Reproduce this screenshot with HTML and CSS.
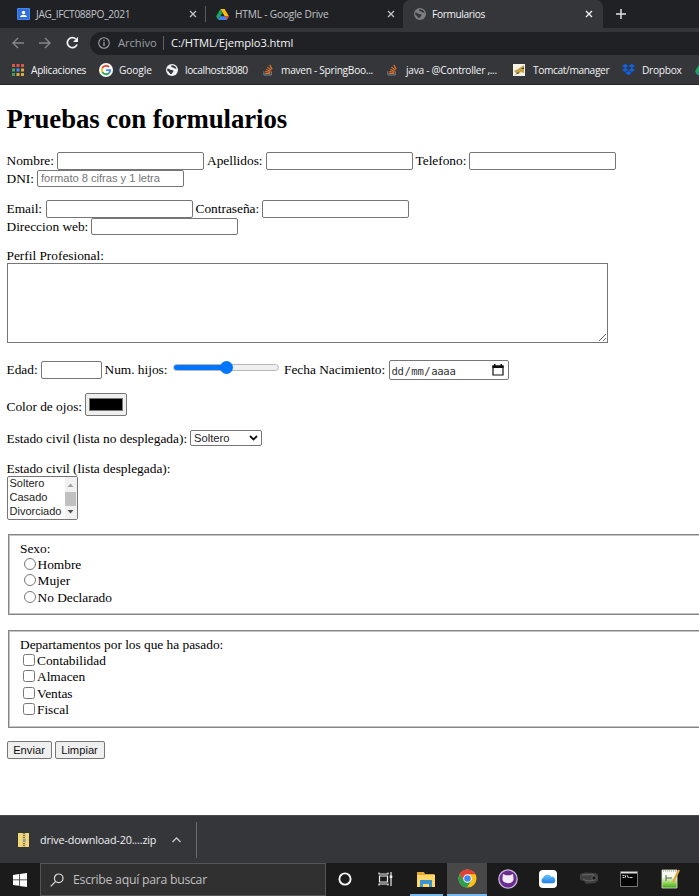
FILE: index.html
```html
<!DOCTYPE html>
<html lang="es">
<head>
<meta charset="utf-8">
<title>Formularios</title>
<link rel="stylesheet" href="styles.css">
</head>
<body>
<svg class="defs" aria-hidden="true">
  <symbol id="close" viewBox="0 0 8 8"><path d="M1 1l6 6M7 1l-6 6" stroke="currentColor" stroke-width="1.3"/></symbol>
  <symbol id="drive" viewBox="0 0 14 12"><path d="M4.7 0h4.6L14 8H9.4z" fill="#fbbc04"/><path d="M4.7 0L7 4 2.4 12 0 8z" fill="#1ea362"/><path d="M4.7 8H14l-2.4 4H2.4z" fill="#4285f4"/><path d="M9.4 8H14l-2.4 4z" fill="#ea4335"/></symbol>
  <symbol id="globe" viewBox="0 0 12 12"><circle cx="6" cy="6" r="6" fill="currentColor"/><path d="M1.300 4.500C3 4 3.500 6 5.500 6s2.500 1 1.500 2-1 2.500-2.500 2C3 9 3.500 7.500 1.300 7zM5.500 1.300c-1 1.200 0 2.200 1.500 2.200s1 1.500 3.500 1.300C10 2.800 8 1.300 5.500 1.300z" fill="#35363a"/></symbol>
  <symbol id="stack" viewBox="0 0 12 13"><path d="M1 8.500v4h8v-4" stroke="#8a8d91" fill="none"/><path d="M2.300 10.700h5.500M2.500 8.700l5.500.6M3.200 6.500l5.100 1.600M4.800 4l4.300 3M7.300 1.500l2.700 4.600" stroke="#d9712b" stroke-width="1.300"/></symbol>
</svg>

<header class="chrome">
  <div class="tabs">
    <div class="tab tab-one">
      <svg width="13" height="12" viewBox="0 0 13 12"><rect width="13" height="12" rx="1" fill="#4285f4"/><rect x="1" y="1" width="11" height="10" fill="#2f6fd6"/><circle cx="6.500" cy="4.500" r="1.700" fill="#fff"/><path d="M3 9c.5-3 6.500-3 7 0z" fill="#fff"/></svg>
      <span class="tab-title t1">JAG_IFCT088PO_2021</span>
      <svg class="x" width="8" height="8"><use href="#close"/></svg>
    </div>
    <div class="tab tab-two">
      <svg width="13" height="11"><use href="#drive"/></svg>
      <span class="tab-title t2">HTML - Google Drive</span>
      <svg class="x" width="8" height="8"><use href="#close"/></svg>
    </div>
    <div class="tab active">
      <svg class="dim" width="12" height="12"><use href="#globe"/></svg>
      <span class="tab-title t3">Formularios</span>
      <svg class="x" width="8" height="8"><use href="#close"/></svg>
    </div>
    <svg class="plus" width="10" height="10" viewBox="0 0 10 10"><path d="M5 0v10M0 5h10" stroke="#dfe1e5" stroke-width="1.500"/></svg>
  </div>
  <div class="toolbar">
    <svg class="nav" width="12" height="12" viewBox="0 0 12 12"><path d="M12 6H1M6 1L1 6l5 5" fill="none" stroke="#85878b" stroke-width="1.400"/></svg>
    <svg class="nav" width="12" height="12" viewBox="0 0 12 12"><path d="M0 6h11M6 1l5 5-5 5" fill="none" stroke="#85878b" stroke-width="1.400"/></svg>
    <svg class="reload" width="13" height="13" viewBox="0 0 13 13"><path d="M11 8.500A5 5 0 1 1 9.800 3" fill="none" stroke="#f1f3f4" stroke-width="1.700"/><path d="M12 .8V6H7z" fill="#f1f3f4"/></svg>
    <div class="omnibox">
      <svg width="12" height="12" viewBox="0 0 12 12"><circle cx="6" cy="6" r="5.300" fill="none" stroke="#9aa0a6" stroke-width="1.100"/><path d="M6 5v4M6 2.700v1.300" stroke="#9aa0a6" stroke-width="1.300"/></svg>
      <span class="scheme">Archivo</span><i></i><span class="url">C:/HTML/Ejemplo3.html</span>
    </div>
  </div>
  <nav class="bookmarks">
    <svg width="12" height="12" viewBox="0 0 12 12"><path d="M0 0h3v3H0zM4.500 0h3v3h-3z" fill="#d9574b"/><path d="M9 0h3v3H9z" fill="#d9574b"/><path d="M0 4.500h3v3H0z" fill="#43a662"/><path d="M4.500 4.500h3v3h-3z" fill="#4b8bf0"/><path d="M9 4.500h3v3H9z" fill="#e0a93d"/><path d="M0 9h3v3H0z" fill="#3f9f5c"/><path d="M4.500 9h3v3h-3zM9 9h3v3H9z" fill="#e0a93d"/></svg>
    <span class="bm b1">Aplicaciones</span>
    <svg width="14" height="14" viewBox="0 0 14 14"><circle cx="7" cy="7" r="7" fill="#fff"/><g fill="none" stroke-width="1.800"><path d="M10 4A4.200 4.200 0 0 0 3.300 5" stroke="#ea4335"/><path d="M3.300 5a4.200 4.200 0 0 0 0 4" stroke="#fbbc05"/><path d="M3.300 9A4.200 4.200 0 0 0 10 10" stroke="#34a853"/><path d="M10 10a4 4 0 0 0 1.200-2.900H7" stroke="#4285f4"/></g></svg>
    <span class="bm b2">Google</span>
    <svg class="light" width="12" height="12"><use href="#globe"/></svg>
    <span class="bm b3">localhost:8080</span>
    <svg width="11" height="13"><use href="#stack"/></svg>
    <span class="bm b4">maven - SpringBoo...</span>
    <svg width="11" height="13"><use href="#stack"/></svg>
    <span class="bm b5">java - @Controller ,...</span>
    <svg width="12" height="12" viewBox="0 0 12 12"><path d="M0 0h12v12H0z" fill="#f6f3e6"/><path d="M1 7l4-2 6-4v8L8 8l-3 2-2-1z" fill="#c2a24d"/><path d="M2 11l3-3 1 1zM8 5l3-2v2z" fill="#4b4020"/></svg>
    <span class="bm b6">Tomcat/manager</span>
    <svg width="13" height="11" viewBox="0 0 13 11"><path d="M3.200 0l3.300 2-3.300 2L0 2zM9.800 0L13 2 9.800 4 6.500 2zM3.200 4l3.300 2-3.300 2L0 6zM9.800 4L13 6 9.800 8 6.500 6zM6.500 7l3.300 2-3.300 2-3.300-2z" fill="#0d63e8"/></svg>
    <span class="bm b7">Dropbox</span>
    <svg width="13" height="11"><use href="#drive"/></svg>
  </nav>
</header>

<main class="page">
  <h1>Pruebas con formularios</h1>
  <form>
    <div class="row">
      <label class="nombre">Nombre:</label><input type="text"><label class="apellidos">Apellidos:</label><input type="text"><label class="telefono">Telefono:</label><input type="text">
    </div>
    <div class="row"><label class="dni">DNI:</label><input type="text" placeholder="formato 8 cifras y 1 letra"></div>
    <div class="row gap-email"><label class="email">Email:</label><input type="text"><label class="pass">Contraseña:</label><input type="password"></div>
    <div class="row"><label class="web">Direccion web:</label><input type="text"></div>
    <div class="profile"><label>Perfil Profesional:</label><textarea></textarea></div>
    <div class="row numbers">
      <label class="edad">Edad:</label><input class="age" type="text"><label class="hijos">Num. hijos:</label>
      <div class="slider"><span class="thumb"></span></div>
      <label class="fecha">Fecha Nacimiento:</label>
      <div class="date"><span>dd<b>/</b><em>mm</em><b>/</b>aaaa</span><svg width="12" height="12" viewBox="0 0 12 12"><path d="M1 2h10v9H1z" fill="none" stroke="#111" stroke-width="1.200"/><path d="M.4 1.500h11.200V4H.4zM2 0h1.500v2H2zM8.500 0H10v2H8.500z" fill="#111"/></svg></div>
    </div>
    <div class="row eyes"><label class="ojos">Color de ojos:</label><div class="color"><span></span></div></div>
    <div class="row civil"><label class="lista">Estado civil (lista no desplegada):</label><div class="select"><span>Soltero</span><svg width="9" height="6" viewBox="0 0 9 6"><path d="M1 1l3.500 3.500L8 1" fill="none" stroke="#111" stroke-width="1.800"/></svg></div></div>
    <div class="civil-open">
      <label>Estado civil (lista desplegada):</label>
      <div class="listbox">
        <ul><li>Soltero</li><li>Casado</li><li>Divorciado</li></ul>
        <div class="scroll"><svg width="7" height="4" viewBox="0 0 7 4"><path d="M.5 4L3.500 .5l3 3.500z" fill="#a3a3a3"/></svg><span></span><svg width="7" height="4" viewBox="0 0 7 4"><path d="M.5 0l3 3.500 3-3.500z" fill="#505050"/></svg></div>
      </div>
    </div>
    <fieldset class="sexo">
      <p>Sexo:</p>
      <label><input type="radio" name="s">Hombre</label>
      <label><input type="radio" name="s">Mujer</label>
      <label><input type="radio" name="s">No Declarado</label>
    </fieldset>
    <fieldset class="deps">
      <p>Departamentos por los que ha pasado:</p>
      <label><input type="checkbox">Contabilidad</label>
      <label><input type="checkbox">Almacen</label>
      <label><input type="checkbox">Ventas</label>
      <label><input type="checkbox">Fiscal</label>
    </fieldset>
    <div class="buttons"><button type="button" class="send">Enviar</button><button type="button" class="clear">Limpiar</button></div>
  </form>
</main>

<section class="downloads">
  <svg width="11" height="14" viewBox="0 0 11 14"><path d="M0 0h11v14H0z" fill="#f1d778"/><path d="M4.500 0h3v14h-3z" fill="#d6c17a"/><path d="M6 0v14" stroke="#625c48" stroke-width="1.500" stroke-dasharray="1 1"/><path d="M5 6h2.500v3H5z" fill="#929799"/></svg>
  <span class="file">drive-download-20....zip</span>
  <svg class="chev" width="9" height="6" viewBox="0 0 9 6"><path d="M.5 5l4-4 4 4" fill="none" stroke="#c6c8cb" stroke-width="1.300"/></svg>
</section>

<footer class="taskbar">
  <div class="start"><svg width="14" height="14" viewBox="0 0 14 14"><path d="M0 2l6-.9v5.500H0zM6.700 1L14 0v6.600H6.700zM0 7.300h6v5.500L0 12zM6.700 7.300H14V14l-7.300-1z" fill="#fff"/></svg></div>
  <div class="search"><svg width="14" height="14" viewBox="0 0 14 14"><circle cx="8.700" cy="5.300" r="4.300" fill="none" stroke="#dedede" stroke-width="1.200"/><path d="M5.700 8.400L.7 13.400" stroke="#dedede" stroke-width="1.200"/></svg><span>Escribe aquí para buscar</span></div>
  <div class="app"><svg width="14" height="14" viewBox="0 0 14 14"><circle cx="7" cy="7" r="5.600" fill="none" stroke="#f4f4f4" stroke-width="1.900"/></svg></div>
  <div class="app"><svg width="15" height="14" viewBox="0 0 15 14"><path d="M1.500 4h8v6h-8zM1 .5v1.500h9V.5M1 13.500V12h9v1.500M13 0v14" fill="none" stroke="#eee" stroke-width="1.200"/><path d="M11.700 3.500h2.600V6h-2.600z" fill="#eee"/></svg></div>
  <div class="app open"><svg width="18" height="15" viewBox="0 0 18 15"><path d="M0 0h7l1 2h9.500v13H0z" fill="#e7a92f"/><path d="M0 3h18v12H0z" fill="#ffd76a"/><path d="M3 15V8h12v7h-3v-3H6v3z" fill="#3d94cf"/></svg></div>
  <div class="app current"><svg width="19" height="19" viewBox="0 0 20 20"><circle cx="10" cy="10" r="9.500" fill="#fbc116"/><path d="M1.800 5.200A9.500 9.500 0 0 1 18.300 5.500H10L6 12.300z" fill="#e34133"/><path d="M1.800 5.200A9.500 9.500 0 0 0 9.500 19.500L14 12.200H6z" fill="#2da04e"/><circle cx="10" cy="10" r="4.500" fill="#fff"/><circle cx="10" cy="10" r="3.500" fill="#4285f4"/></svg></div>
  <div class="app"><svg width="20" height="20" viewBox="0 0 20 20"><circle cx="10" cy="10" r="9.200" fill="#6b2c91" stroke="#c8b6d8" stroke-width="1.300"/><path d="M5 5l3 1.300h4L15 5l.6 4.500c0 3-2.300 4.700-5.600 4.700S4.400 12.500 4.400 9.500z" fill="#f3e9f7"/></svg></div>
  <div class="app"><svg width="18" height="18" viewBox="0 0 18 18"><defs><linearGradient id="sky" x2="0" y2="1"><stop stop-color="#6cc4f8"/><stop offset="1" stop-color="#1f7be6"/></linearGradient></defs><rect width="18" height="18" rx="4" fill="#fff"/><path d="M4.500 13.300a3 3 0 0 1-.4-5.500A4.300 4.300 0 0 1 12 6.800a3.300 3.300 0 0 1 1.700 6.500z" fill="url(#sky)"/></svg></div>
  <div class="app"><svg width="20" height="13" viewBox="0 0 20 13"><path d="M1 2l5-1.500 11 .5 2 2v6l-3 2-9 1-2-3-4-1z" fill="#3f3f3f"/><path d="M3 3l12-.5M4 7.500l6 1.500 5-1" stroke="#686868" fill="none"/><circle cx="15" cy="6" r="2.200" fill="#161616" stroke="#777" stroke-width=".8"/></svg></div>
  <div class="app"><svg width="18" height="16" viewBox="0 0 18 16"><path d="M.5.500h17v15H.5z" fill="#050505" stroke="#777"/><path d="M1 1h16v1.500H1z" fill="#dedede"/><path d="M2.500 4.500h2M2.500 6.500h2M5.500 4.500v2M7 4l1.500 3M9.500 6.500h3" stroke="#ddd"/></svg></div>
  <div class="app"><svg width="19" height="20" viewBox="0 0 19 20"><defs><linearGradient id="leaf" x2="0" y2="1"><stop offset=".4" stop-color="#f6f9ee"/><stop offset=".75" stop-color="#8bd04a"/><stop offset="1" stop-color="#3f9e1c"/></linearGradient></defs><path d="M1 1h15v18H1z" fill="url(#leaf)" stroke="#dfe8d4" stroke-width=".8"/><path d="M2 2h13" stroke="#8b8f80" stroke-dasharray="1 1"/><path d="M5 6v6M5 9h6" stroke="#56624a"/><path d="M17 .5l2 1-5.500 11-2 1.500.2-2.800z" fill="#dda53d"/></svg></div>
</footer>
</body>
</html>
```

FILE: styles.css
```css
* { box-sizing: border-box; }
body { margin: 0; width: 699px; height: 896px; overflow: hidden; background: #fff; display: flex; flex-direction: column; }
svg { flex: none; display: block; }
.defs { position: absolute; width: 0; height: 0; }
span, label { white-space: nowrap; }

.chrome { height: 85px; flex: none; background: #35363a; border-bottom: 1px solid #252629; font: 10.2px "Open Sans", sans-serif; color: #f1f3f4; overflow: hidden; }
.tabs { height: 28px; background: #202124; display: flex; align-items: center; }
.tab { height: 28px; display: flex; align-items: center; color: #c0c3c7; }
.tab-one { width: 206px; padding: 0 9px 0 17px; background: linear-gradient(#5a5b5f, #5a5b5f) right center / 1px 16px no-repeat; }
.tab-two { width: 197px; padding: 0 8px 0 10px; }
.tab.active { width: 200px; padding: 0 10px 0 11px; background: #35363a; border-radius: 7px 7px 0 0; color: #f1f3f4; }
.tab-title { margin-left: 6px; }
.x { margin-left: auto; }
.t1 { letter-spacing: -.35px; }
.t2 { letter-spacing: -.2px; }
.t3 { letter-spacing: -.38px; }
.dim { color: #7b7d81; }
.light { color: #f1f3f4; }
.plus { margin-left: 13px; }
.toolbar { height: 29px; padding-left: 12px; display: flex; align-items: center; }
.nav { margin-right: 15px; }
.reload { margin-right: 11px; }
.omnibox { flex: 1; height: 23px; margin-top: 1px; background: #202124; border-radius: 12px 0 0 12px; padding-left: 8px; display: flex; align-items: center; font-size: 11.2px; line-height: 15px; }
.omnibox span { margin-top: -1px; }
.omnibox .scheme { width: 39px; margin-left: 8px; color: #9aa0a6; letter-spacing: -.05px; }
.omnibox i { width: 1px; height: 14px; background: #5f6368; margin: 0 7px 0 6px; }
.url { letter-spacing: -.08px; }
.bookmarks { height: 25px; padding-left: 12px; display: flex; align-items: center; white-space: nowrap; }
.bm { margin-left: 7px; flex: none; letter-spacing: -.3px; }
.b1 { width: 68px; }
.b2 { width: 47px; margin-left: 6px; letter-spacing: -.1px; }
.b3 { width: 78px; letter-spacing: -.42px; }
.b4 { width: 106px; }
.b5 { width: 107px; margin-left: 8px; }
.b6 { width: 89px; letter-spacing: -.38px; margin-left: 8px; }
.b7 { width: 53px; }

.page { flex: none; height: 730px; padding-left: 6.500px; font: 13.4px/17px "Liberation Serif", serif; color: #000; overflow: hidden; }
.page label, fieldset p { letter-spacing: -.025px; }
h1 { font-size: 26.8px; line-height: 32px; margin: 18px 0 17px; white-space: nowrap; letter-spacing: -.1px; }
.row { display: flex; align-items: center; height: 17.500px; }
.row label { flex: none; }
input[type=text], input[type=password] { width: 147px; height: 17.500px; flex: none; border: 1px solid #767676; border-radius: 2px; padding: 0 2px 0 3px; margin: 0; font: 11.2px "Liberation Sans", sans-serif; letter-spacing: -.04px; }
input::placeholder { color: #757575; }
.nombre { width: 50.500px; }
.apellidos { width: 61.500px; padding-left: 3px; }
.telefono { width: 56.500px; padding-left: 3px; }
.dni { width: 30.500px; }
.gap-email { margin-top: 13px; }
.email { width: 39px; }
.pass { width: 69.500px; padding-left: 3px; }
.web { width: 84.500px; }
.profile { margin-top: 12px; display: flex; flex-direction: column; height: 96px; }
.profile textarea { width: 601px; height: 80px; flex: none; margin: -1px 0 0; border: 1px solid #767676; }
.numbers { margin-top: 17px; height: 20px; }
.numbers label { margin-top: -1px; }
.numbers .edad { width: 34px; }
.numbers .age { width: 61px; }
.hijos { width: 71.500px; padding-left: 3px; }
.slider { width: 106px; height: 7px; margin-top: -5px; border: 1px solid #b8b8b8; border-radius: 4px; background: linear-gradient(90deg, #0075ff 50%, #efefef 50%); display: flex; align-items: center; justify-content: center; }
.thumb { width: 13px; height: 13px; flex: none; border-radius: 50%; background: #0075ff; }
.fecha { width: 109.500px; padding-left: 5px; }
.date { width: 120px; height: 20px; border: 1px solid #767676; border-radius: 2px; padding: 0 4px 0 2px; display: flex; align-items: center; justify-content: space-between; font: 10.600px "DejaVu Sans Mono", monospace; color: #333; }
.date span { margin-top: 1px; letter-spacing: -.3px; }
.date b { font-weight: 400; margin: 0 .8px; }
.date em { font-style: normal; }
.eyes { margin-top: 13px; height: 23px; }
.ojos { width: 78.500px; padding-top: 4px; }
.color { width: 42px; height: 23px; border: 1px solid #767676; border-radius: 2px; background: #efefef; padding: 4px 3px; }
.color span { display: block; height: 13px; background: #000; border: 1px solid #777; }
.civil { margin-top: 14px; height: 16px; }
.lista { width: 183.500px; }
.select { width: 72px; height: 16px; border: 1px solid #767676; border-radius: 2px; padding: 0 3px; display: flex; align-items: center; justify-content: space-between; font: 11.2px "Liberation Sans", sans-serif; color: #222; }
.civil-open { margin-top: 14px; display: flex; flex-direction: column; height: 60px; }
.civil-open label { height: 16px; flex: none; }
.listbox { width: 71px; height: 44px; flex: none; border: 1px solid #767676; border-radius: 2px; display: flex; font: 11px/14px "Liberation Sans", sans-serif; color: #222; overflow: hidden; }
.listbox ul { list-style: none; margin: -1px 0 0; padding: 0 0 0 2px; width: 57px; flex: none; }
.scroll { flex: 1; background: #f1f1f1; display: flex; flex-direction: column; align-items: center; justify-content: space-between; padding: 6px 0 5px; }
.scroll span { width: 11px; height: 14px; background: #c1c1c1; margin-top: 1px; }
fieldset { margin: 0 0 0 1.500px; width: 720px; border: 1px solid #858585; box-shadow: inset 0 0 0 1px #c4c4c4; padding: 5px 0 0 11px; display: flex; flex-direction: column; }
fieldset p { margin: 0; height: 16px; line-height: 17px; }
fieldset label { display: flex; align-items: center; height: 16.500px; }
fieldset input { width: 12px; height: 12px; flex: none; margin: -1px 2px 0 3px; }
.sexo { margin-top: 14px; height: 81px; }
.sexo input { margin-left: 3.500px; }
.deps { margin-top: 15px; height: 98px; }
.buttons { margin-top: 13px; display: flex; gap: 3px; }
button { height: 18px; padding: 0; border: 1px solid #767676; border-radius: 2px; background: #efefef; color: #111; font: 11.2px "Liberation Sans", sans-serif; }
.send { width: 45px; }
.clear { width: 50px; }

.downloads { height: 48px; flex: none; background: linear-gradient(#696b6f, #696b6f) 196px 6px / 1px 36px no-repeat #35363a; border-top: 1px solid #484b4c; padding-left: 18px; display: flex; align-items: center; color: #eef0f2; font: 10.8px "Open Sans", sans-serif; }
.file { width: 116px; margin-left: 11px; letter-spacing: -.16px; }
.chev { margin-left: 16px; }
.taskbar { height: 33px; flex: none; background: #1b1b1b; display: flex; overflow: hidden; }
.start { width: 40px; flex: none; display: flex; align-items: center; justify-content: center; }
.search { width: 286px; flex: none; border: 1px solid #555; background: #303030; padding-left: 9px; display: flex; align-items: center; font: 12.300px "Open Sans", sans-serif; color: #bfbfbf; }
.search span { margin-left: 9px; letter-spacing: -.28px; }
.app { width: 40.600px; flex: none; display: flex; align-items: center; justify-content: center; border-bottom: 2px solid transparent; }
.app:nth-child(3) { margin-left: -1px; }
.open { background: linear-gradient(#76b9ed, #76b9ed) center bottom / 33px 2px no-repeat; border: 0; }
.current { background: #484848; border-color: #76b9ed; }
```
